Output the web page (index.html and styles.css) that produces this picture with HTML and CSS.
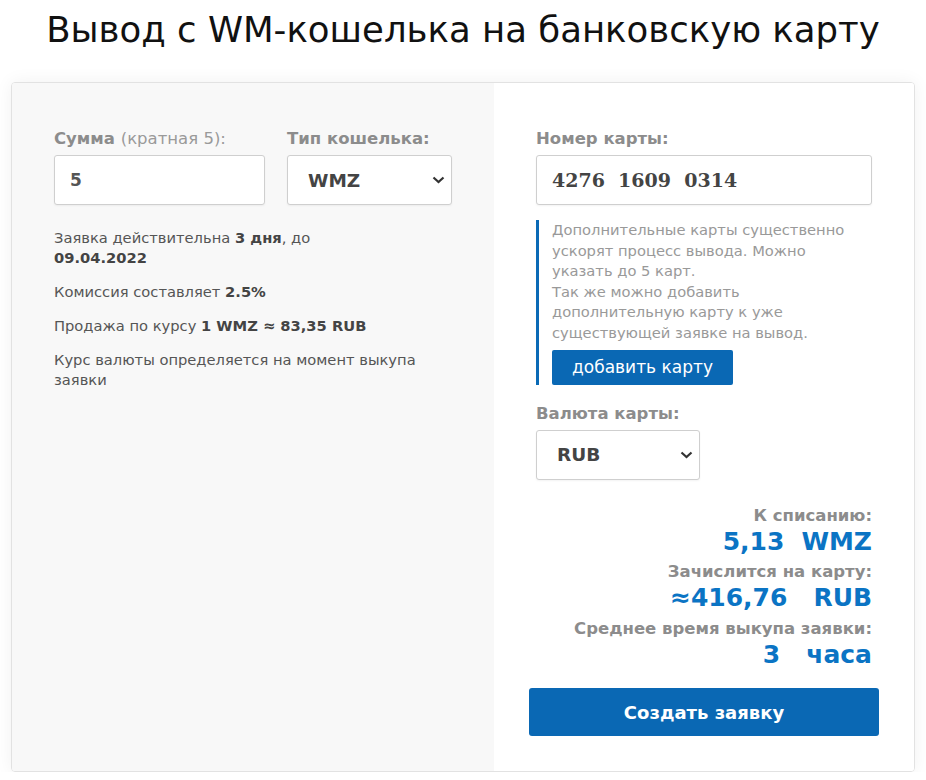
FILE: index.html
```html
<!DOCTYPE html>
<html lang="ru">
<head>
    <meta charset="UTF-8">
    <meta name="viewport" content="width=device-width, initial-scale=1.0">
    <title>Вывод с WM-кошелька</title>
    <link rel="stylesheet" href="styles.css">
</head>
<body>
    <h1>Вывод с WM-кошелька на банковскую карту</h1>

    <div class="card">
        <div class="pane pane-left">
            <div class="field-row">
                <div class="field field-sum">
                    <label class="label">Сумма <span class="muted">(кратная 5):</span></label>
                    <input type="text" class="input" value="5">
                </div>
                <div class="field field-wallet">
                    <label class="label">Тип кошелька:</label>
                    <div class="select-wrap">
                        <select class="select">
                            <option>WMZ</option>
                            <option>WMR</option>
                        </select>
                        <svg class="chevron" width="13" height="8" viewBox="0 0 13 8"><path d="M1.5 1.5 L6.5 6 L11.5 1.5" fill="none" stroke="#333" stroke-width="2.2"/></svg>
                    </div>
                </div>
            </div>

            <div class="notes">
                <p>Заявка действительна <b>3 дня</b>, до<br><b>09.04.2022</b></p>
                <p>Комиссия составляет <b>2.5%</b></p>
                <p>Продажа по курсу <b>1 WMZ ≈ 83,35 RUB</b></p>
                <p>Курс валюты определяется на момент выкупа заявки</p>
            </div>
        </div>

        <div class="pane pane-right">
            <div class="field">
                <label class="label">Номер карты:</label>
                <input type="text" class="input input-card" value="4276  1609  0314">
            </div>

            <div class="hint">
                <p>Дополнительные карты существенно ускорят процесс вывода. Можно указать до 5 карт.</p>
                <p>Так же можно добавить дополнительную карту к уже существующей заявке на вывод.</p>
                <button class="btn-add">добавить карту</button>
            </div>

            <div class="field field-currency">
                <label class="label">Валюта карты:</label>
                <div class="select-wrap">
                    <select class="select">
                        <option>RUB</option>
                        <option>USD</option>
                    </select>
                    <svg class="chevron" width="13" height="8" viewBox="0 0 13 8"><path d="M1.5 1.5 L6.5 6 L11.5 1.5" fill="none" stroke="#333" stroke-width="2.2"/></svg>
                </div>
            </div>

            <div class="summary">
                <div class="sum-label">К списанию:</div>
                <div class="sum-value">5,13<span class="gap-s"></span>WMZ</div>
                <div class="sum-label">Зачислится на карту:</div>
                <div class="sum-value">≈416,76<span class="gap-l"></span>RUB</div>
                <div class="sum-label">Среднее время выкупа заявки:</div>
                <div class="sum-value">3<span class="gap-l"></span>часа</div>
            </div>

            <button class="btn-submit">Создать заявку</button>
        </div>
    </div>
</body>
</html>
```

FILE: styles.css
```css
* {
    margin: 0;
    padding: 0;
    box-sizing: border-box;
}

body {
    font-family: 'DejaVu Sans', Verdana, sans-serif;
    background: #fff;
    color: #555;
    padding: 0 11px;
}

h1 {
    font-weight: normal;
    font-size: 35.5px;
    color: #111;
    text-align: center;
    line-height: 60px;
    height: 60px;
    margin-bottom: 22px;
}

.card {
    display: flex;
    border: 1px solid #e2e2e2;
    border-radius: 4px;
    box-shadow: 0 0 18px rgba(0, 0, 0, 0.06);
    height: 690px;
    overflow: hidden;
}

.pane {
    padding: 46px 42px 0;
}

.pane-left {
    width: 482px;
    background: #f8f8f8;
}

.pane-right {
    flex: 1;
    background: #fff;
    display: flex;
    flex-direction: column;
}

.field-row {
    display: flex;
    gap: 22px;
}

.field {
    display: flex;
    flex-direction: column;
}

.field-sum {
    flex: 1;
    min-width: 0;
}

.field-wallet {
    width: 165px;
    flex-shrink: 0;
}

.label {
    font-size: 16.5px;
    font-weight: bold;
    color: #8c8c8c;
    line-height: 20px;
    margin-bottom: 6px;
    white-space: nowrap;
}

.muted {
    font-weight: normal;
    color: #9a9a9a;
}

.input {
    width: 100%;
    height: 50px;
    border: 1px solid #cfcfcf;
    border-radius: 3px;
    background: #fff;
    padding: 0 15px;
    font-family: 'DejaVu Sans', Verdana, sans-serif;
    font-size: 17px;
    font-weight: bold;
    color: #555;
    box-shadow: 0 1px 2px rgba(0, 0, 0, 0.05);
    outline: none;
}

.input-card {
    font-family: 'DejaVu Serif', Georgia, serif;
    font-size: 19px;
    color: #444;
    white-space: pre;
}

.select-wrap {
    position: relative;
}

.select {
    appearance: none;
    -webkit-appearance: none;
    width: 100%;
    height: 50px;
    border: 1px solid #cfcfcf;
    border-radius: 3px;
    background: #fff;
    padding: 0 20px;
    font-family: 'DejaVu Sans', Verdana, sans-serif;
    font-size: 18.5px;
    font-weight: bold;
    color: #444;
    box-shadow: 0 1px 2px rgba(0, 0, 0, 0.05);
    outline: none;
}

.chevron {
    position: absolute;
    right: 7px;
    top: 21px;
    pointer-events: none;
}

.notes {
    margin-top: 23px;
    font-size: 14.7px;
    line-height: 20px;
    color: #555;
}

.notes p {
    margin-bottom: 14px;
}

.notes b {
    color: #444;
}

.hint {
    margin-top: 15px;
    border-left: 3px solid #0a6ab6;
    padding: 0 15px 0 13px;
    font-size: 14.7px;
    line-height: 20.6px;
    color: #999;
}

.btn-add {
    margin-top: 6px;
    width: 181px;
    height: 35px;
    background: #0a68b4;
    color: #fff;
    border: none;
    border-radius: 2px;
    font-family: 'DejaVu Sans', Verdana, sans-serif;
    font-size: 17px;
    cursor: pointer;
    display: block;
}

.field-currency {
    margin-top: 19px;
    width: 164px;
}

.summary {
    margin-top: 25px;
    text-align: right;
}

.sum-label {
    font-size: 16.5px;
    font-weight: bold;
    color: #8c8c8c;
    line-height: 22px;
    white-space: nowrap;
}

.sum-value {
    font-size: 25px;
    font-weight: bold;
    color: #0b74c4;
    line-height: 30px;
    margin-bottom: 4.5px;
}

.gap-s {
    display: inline-block;
    width: 17px;
}

.gap-l {
    display: inline-block;
    width: 26px;
}

.btn-submit {
    margin: 14px -7px 0;
    height: 48px;
    background: #0a68b4;
    color: #fff;
    border: none;
    border-radius: 3px;
    font-family: 'DejaVu Sans', Verdana, sans-serif;
    font-size: 18px;
    font-weight: bold;
    cursor: pointer;
}
```
